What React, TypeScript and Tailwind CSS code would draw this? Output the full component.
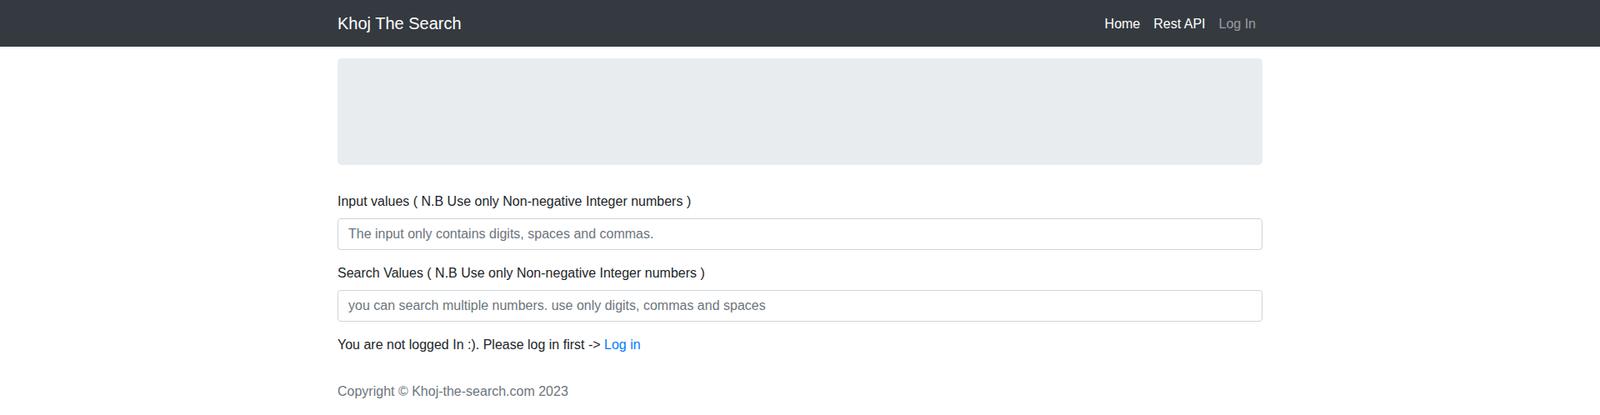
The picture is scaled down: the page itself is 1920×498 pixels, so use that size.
export default function App() {
  return (
    <div className="min-h-screen bg-white text-[#212529] font-['Liberation_Sans',Arial,sans-serif] text-base leading-6">
      {/* Navbar */}
      <nav className="bg-[#343a40] h-[56px]">
        <div className="mx-auto w-[1140px] px-[15px] h-full flex items-center justify-between">
          <a href="#" className="text-white text-[20px] leading-[30px]">Khoj The Search</a>
          <ul className="flex items-center pt-px">
            <li><a href="#" className="block px-2 py-2 text-white">Home</a></li>
            <li><a href="#" className="block px-2 py-2 text-white">Rest API</a></li>
            <li><a href="#" className="block px-2 py-2 text-white/50">Log In</a></li>
          </ul>
        </div>
      </nav>

      <div className="mx-auto w-[1140px] px-[15px] pt-[14px]">
        {/* Jumbotron */}
        <div className="bg-[#e9ecef] rounded-[5px] h-[128px] mb-8"></div>

        <form>
          <div className="mb-4">
            <label className="block mb-2">Input values ( N.B Use only Non-negative Integer numbers )</label>
            <input
              type="text"
              placeholder="The input only contains digits, spaces and commas."
              className="block w-full h-[38px] px-3 py-1.5 border border-[#ced4da] rounded-[4px] text-[#495057] placeholder:text-[#6c757d] outline-none"
            />
          </div>
          <div className="mb-4">
            <label className="block mb-2">Search Values ( N.B Use only Non-negative Integer numbers )</label>
            <input
              type="text"
              placeholder="you can search multiple numbers. use only digits, commas and spaces"
              className="block w-full h-[38px] px-3 py-1.5 border border-[#ced4da] rounded-[4px] text-[#495057] placeholder:text-[#6c757d] outline-none"
            />
          </div>
        </form>

        <p className="mb-4">
          You are not logged In :). Please log in first -&gt; <a href="#" className="text-[#007bff]">Log in</a>
        </p>

        <footer className="pt-4 text-[#6c757d]">
          <p>Copyright © Khoj-the-search.com 2023</p>
        </footer>
      </div>
    </div>
  );
}
